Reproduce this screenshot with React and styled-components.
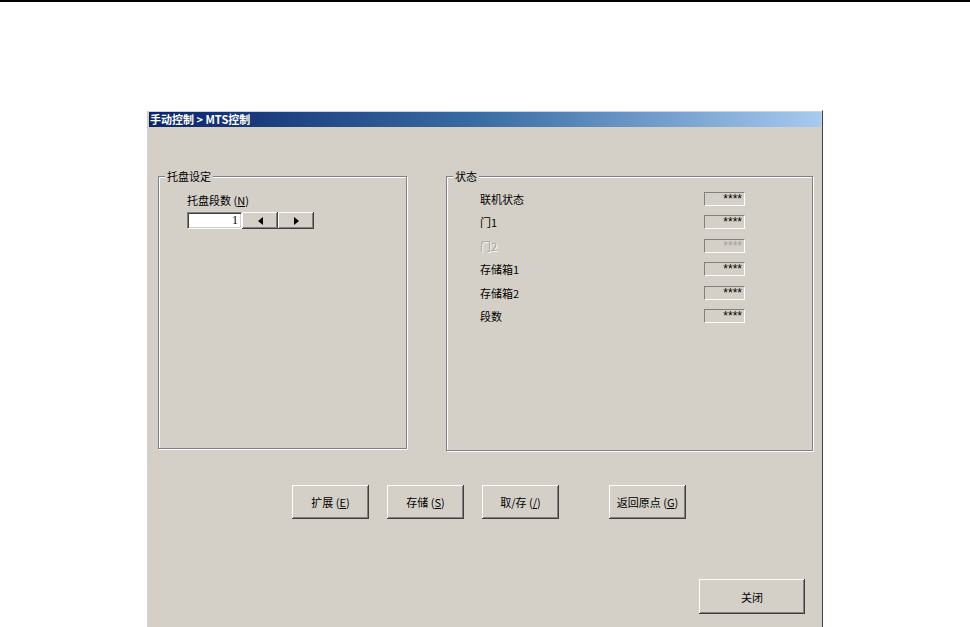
import React from 'react';
import styled, { createGlobalStyle } from 'styled-components';

const GlobalStyle = createGlobalStyle`
  html, body {
    margin: 0;
    padding: 0;
    background: #ffffff;
    overflow: hidden;
  }
  body {
    font-family: "Noto Sans CJK SC", "Liberation Sans", sans-serif;
    font-size: 11px;
    color: #000;
  }
`;

const Page = styled.div`
  width: 970px;
  height: 627px;
  border-top: 2px solid #000;
  box-sizing: border-box;
  padding: 108px 0 0 146px;
`;

const Window = styled.div`
  width: 677px;
  height: 530px;
  box-sizing: border-box;
  background: #d4d0c8;
  border-top: 1px solid #ffffff;
  border-left: 1px solid #ffffff;
  border-right: 1px solid #404040;
  border-bottom: 1px solid #404040;
  padding: 1px 1px 0 2px;
  display: flex;
  flex-direction: column;
`;

const TitleBar = styled.div`
  height: 15px;
  background: linear-gradient(90deg, #0a246a 0%, #3a6ea5 50%, #a6caf0 100%);
  color: #fff;
  font-weight: 700;
  font-size: 11px;
  line-height: 15px;
  padding-left: 1px;
  white-space: nowrap;
`;

const Body = styled.div`
  display: flex;
  flex-direction: column;
  padding: 49px 8px 0 9px;
`;

const GroupRow = styled.div`
  display: flex;
  gap: 39px;
  align-items: flex-start;
`;

const GroupBox = styled.div`
  position: relative;
  box-sizing: border-box;
  width: ${(p) => p.$w}px;
  height: ${(p) => p.$h}px;
  border: 1px solid #808080;
  box-shadow: inset 1px 1px 0 #ffffff, 1px 1px 0 #ffffff;
`;

const Legend = styled.span`
  position: absolute;
  top: -8px;
  left: 6px;
  padding: 0 2px;
  background: #d4d0c8;
  line-height: 15px;
  font-size: 11px;
`;

const TrayContent = styled.div`
  padding: 16px 0 0 28px;
  display: flex;
  flex-direction: column;
  gap: 5px;
`;

const FieldLabel = styled.div`
  line-height: 14px;
  font-size: 11px;
`;

const SpinRow = styled.div`
  display: flex;
  align-items: stretch;
  height: 17px;
`;

const NumberInput = styled.div`
  width: 55px;
  box-sizing: border-box;
  background: #fff;
  border-top: 1px solid #808080;
  border-left: 1px solid #808080;
  border-right: 1px solid #ffffff;
  border-bottom: 1px solid #ffffff;
  box-shadow: inset 1px 1px 0 #404040, inset -1px -1px 0 #d4d0c8;
  text-align: right;
  padding-right: 3px;
  line-height: 15px;
  font-family: "Liberation Serif", serif;
  font-size: 12px;
`;

const RaisedButton = styled.button`
  box-sizing: border-box;
  width: ${(p) => p.$w}px;
  height: ${(p) => p.$h}px;
  padding: 0;
  margin: 0;
  border: none;
  background: #d4d0c8;
  box-shadow: inset -1px -1px 0 #404040, inset 1px 1px 0 #ffffff,
    inset -2px -2px 0 #808080, inset 2px 2px 0 #d4d0c8;
  font-family: "Noto Sans CJK SC", "Liberation Sans", sans-serif;
  font-size: 11px;
  color: #000;
  display: flex;
  align-items: center;
  justify-content: center;
  cursor: default;
`;

const StatusList = styled.div`
  padding: 15px 0 0 33px;
  display: flex;
  flex-direction: column;
  gap: 9.4px;
`;

const StatusRow = styled.div`
  display: flex;
  align-items: center;
  height: 14px;
`;

const StatusLabel = styled.div`
  width: 224px;
  font-size: 11px;
  line-height: 14px;
  color: ${(p) => (p.$disabled ? '#a0a0a0' : '#000')};
  text-shadow: ${(p) => (p.$disabled ? '1px 1px 0 #ffffff' : 'none')};
`;

const StatusBox = styled.div`
  width: 41px;
  height: 14px;
  box-sizing: border-box;
  border-top: 1px solid #808080;
  border-left: 1px solid #808080;
  border-right: 1px solid #ffffff;
  border-bottom: 1px solid #ffffff;
  text-align: right;
  padding: 1px 2px 0 0;
  font-family: "Liberation Sans", sans-serif;
  font-size: 12px;
  line-height: 11px;
  color: ${(p) => (p.$disabled ? '#a0a0a0' : '#000')};
`;

const ActionRow = styled.div`
  display: flex;
  margin-top: 34px;
  padding-left: 134px;
`;

const ActionGap = styled.div`
  width: ${(p) => p.$w}px;
`;

const CloseRow = styled.div`
  display: flex;
  justify-content: flex-end;
  margin-top: 60px;
  padding-right: 8px;
`;

const Arrow = ({ dir }) => (
  <svg width="5" height="8" viewBox="0 0 5 8">
    {dir === 'left' ? (
      <polygon points="5,0 5,8 0,4" fill="#000" />
    ) : (
      <polygon points="0,0 0,8 5,4" fill="#000" />
    )}
  </svg>
);

const statusItems = [
  { label: '联机状态' },
  { label: '门1' },
  { label: '门2', disabled: true },
  { label: '存储箱1' },
  { label: '存储箱2' },
  { label: '段数' },
];

const App = () => (
  <>
    <GlobalStyle />
    <Page>
      <Window>
        <TitleBar>手动控制 &gt; MTS控制</TitleBar>
        <Body>
          <GroupRow>
            <GroupBox $w={249} $h={273}>
              <Legend>托盘设定</Legend>
              <TrayContent>
                <FieldLabel>
                  托盘段数 (<u>N</u>)
                </FieldLabel>
                <SpinRow>
                  <NumberInput>1</NumberInput>
                  <RaisedButton $w={36} $h={17}>
                    <Arrow dir="left" />
                  </RaisedButton>
                  <RaisedButton $w={36} $h={17}>
                    <Arrow dir="right" />
                  </RaisedButton>
                </SpinRow>
              </TrayContent>
            </GroupBox>
            <GroupBox $w={367} $h={275}>
              <Legend>状态</Legend>
              <StatusList>
                {statusItems.map((item) => (
                  <StatusRow key={item.label}>
                    <StatusLabel $disabled={item.disabled}>{item.label}</StatusLabel>
                    <StatusBox $disabled={item.disabled}>****</StatusBox>
                  </StatusRow>
                ))}
              </StatusList>
            </GroupBox>
          </GroupRow>
          <ActionRow>
            <RaisedButton $w={77} $h={34}>
              扩展 (<u>E</u>)
            </RaisedButton>
            <ActionGap $w={18} />
            <RaisedButton $w={77} $h={34}>
              存储 (<u>S</u>)
            </RaisedButton>
            <ActionGap $w={18} />
            <RaisedButton $w={77} $h={34}>
              取/存 (<u>/</u>)
            </RaisedButton>
            <ActionGap $w={50} />
            <RaisedButton $w={77} $h={34}>
              返回原点 (<u>G</u>)
            </RaisedButton>
          </ActionRow>
          <CloseRow>
            <RaisedButton $w={106} $h={35}>
              关闭
            </RaisedButton>
          </CloseRow>
        </Body>
      </Window>
    </Page>
  </>
);

export default App;
